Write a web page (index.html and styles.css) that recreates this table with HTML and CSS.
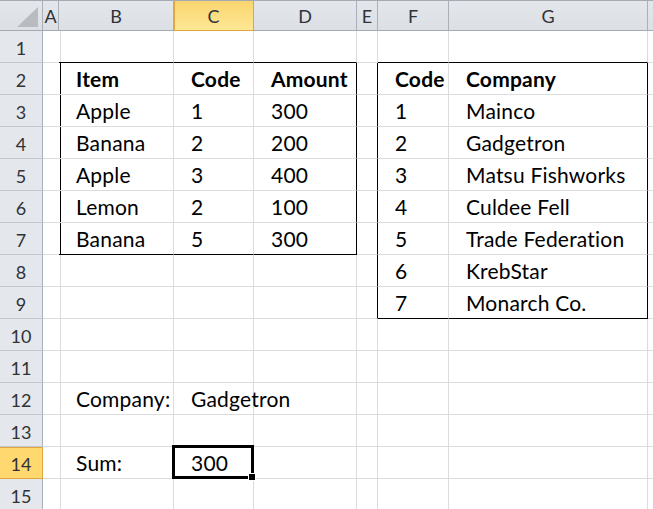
FILE: index.html
```html
<!DOCTYPE html>
<html>
<head>
<meta charset="utf-8">
<link rel="stylesheet" href="styles.css">
</head>
<body>
<div class="sheet">
  <div class="ch corner"><span class="tri"></span></div>
  <div class="ch">A</div><div class="ch">B</div><div class="ch sel">C</div><div class="ch">D</div><div class="ch">E</div><div class="ch">F</div><div class="ch">G</div><div class="ch"></div>

  <div class="rh">1</div>
  <div class="c"></div><div class="c kb"></div><div class="c kb"></div><div class="c kb"></div><div class="c"></div><div class="c kb"></div><div class="c kb"></div><div class="c"></div>

  <div class="rh">2</div>
  <div class="c kr"></div><div class="c b">Item</div><div class="c b">Code</div><div class="c b kr">Amount</div><div class="c kr"></div><div class="c b">Code</div><div class="c b kr">Company</div><div class="c"></div>

  <div class="rh">3</div>
  <div class="c kr"></div><div class="c">Apple</div><div class="c">1</div><div class="c kr">300</div><div class="c kr"></div><div class="c">1</div><div class="c kr">Mainco</div><div class="c"></div>

  <div class="rh">4</div>
  <div class="c kr"></div><div class="c">Banana</div><div class="c">2</div><div class="c kr">200</div><div class="c kr"></div><div class="c">2</div><div class="c kr">Gadgetron</div><div class="c"></div>

  <div class="rh">5</div>
  <div class="c kr"></div><div class="c">Apple</div><div class="c">3</div><div class="c kr">400</div><div class="c kr"></div><div class="c">3</div><div class="c kr">Matsu Fishworks</div><div class="c"></div>

  <div class="rh">6</div>
  <div class="c kr"></div><div class="c">Lemon</div><div class="c">2</div><div class="c kr">100</div><div class="c kr"></div><div class="c">4</div><div class="c kr">Culdee Fell</div><div class="c"></div>

  <div class="rh">7</div>
  <div class="c kr"></div><div class="c kb">Banana</div><div class="c kb">5</div><div class="c kr kb">300</div><div class="c kr"></div><div class="c">5</div><div class="c kr">Trade Federation</div><div class="c"></div>

  <div class="rh">8</div>
  <div class="c"></div><div class="c"></div><div class="c"></div><div class="c"></div><div class="c kr"></div><div class="c">6</div><div class="c kr">KrebStar</div><div class="c"></div>

  <div class="rh">9</div>
  <div class="c"></div><div class="c"></div><div class="c"></div><div class="c"></div><div class="c kr"></div><div class="c kb">7</div><div class="c kr kb">Monarch Co.</div><div class="c"></div>

  <div class="rh">10</div>
  <div class="c"></div><div class="c"></div><div class="c"></div><div class="c"></div><div class="c"></div><div class="c"></div><div class="c"></div><div class="c"></div>

  <div class="rh">11</div>
  <div class="c"></div><div class="c"></div><div class="c"></div><div class="c"></div><div class="c"></div><div class="c"></div><div class="c"></div><div class="c"></div>

  <div class="rh">12</div>
  <div class="c"></div><div class="c">Company:</div><div class="c">Gadgetron</div><div class="c"></div><div class="c"></div><div class="c"></div><div class="c"></div><div class="c"></div>

  <div class="rh">13</div>
  <div class="c"></div><div class="c"></div><div class="c"></div><div class="c"></div><div class="c"></div><div class="c"></div><div class="c"></div><div class="c"></div>

  <div class="rh sel">14</div>
  <div class="c"></div><div class="c">Sum:</div><div class="c">300</div><div class="c"></div><div class="c"></div><div class="c"></div><div class="c"></div><div class="c"></div>

  <div class="rh">15</div>
  <div class="c"></div><div class="c"></div><div class="c"></div><div class="c"></div><div class="c"></div><div class="c"></div><div class="c"></div><div class="c"></div>

  <div class="selection"><span class="handle"></span></div>
</div>
</body>
</html>
```

FILE: styles.css
```css
html, body {
  margin: 0;
  padding: 0;
  background: #ffffff;
  overflow: hidden;
}

.sheet {
  position: relative;
  display: grid;
  grid-template-columns: 43px 16px 115px 80px 103px 21px 71px 199px 1fr;
  grid-template-rows: 31px repeat(15, 32px);
  width: 653px;
  height: 509px;
  overflow: hidden;
  font-family: Lato, "Open Sans", sans-serif;
  font-size: 21px;
  color: #000000;
}

.sheet > div {
  box-sizing: border-box;
  min-width: 0;
}

.ch {
  background: linear-gradient(#e3e6ea, #dcdfe4);
  border-top: 1px solid #a5abb3;
  border-right: 1px solid #a9b0b9;
  border-bottom: 1px solid #a5abb3;
  display: flex;
  align-items: center;
  justify-content: center;
  font-size: 18px;
  color: #2f3338;
  padding-top: 1px;
}

.ch.sel {
  background: linear-gradient(#f9d56f, #ffe795);
  border-right-color: #e1a53d;
  border-bottom-color: #e1a53d;
  box-shadow: inset 1px 0 0 #e1a53d;
}

.corner {
  position: relative;
}

.tri {
  position: absolute;
  right: 4px;
  bottom: 3px;
  width: 0;
  height: 0;
  border-left: 21px solid transparent;
  border-bottom: 20px solid #b8bcc1;
}

.rh {
  background: #e4e7eb;
  border-right: 1px solid #a9b0b9;
  border-bottom: 1px solid #c3c8ce;
  display: flex;
  align-items: center;
  justify-content: center;
  font-size: 18px;
  color: #2f3338;
  padding-top: 3px;
}

.rh.sel {
  background: #ffd870;
  border-right-color: #e1a53d;
  border-bottom-color: #e1a53d;
  box-shadow: inset 0 1px 0 #e1a53d;
}

.c {
  border-right: 1px solid #dadcdd;
  border-bottom: 1px solid #dadcdd;
  display: flex;
  align-items: flex-end;
  padding: 0 0 3px 17px;
  white-space: nowrap;
  line-height: 24px;
  letter-spacing: 0.2px;
}

.c.b {
  font-weight: 700;
}

.c.kr {
  border-right-color: #000000;
}

.c.kb {
  border-bottom-color: #000000;
}

.selection {
  position: absolute;
  left: 172px;
  top: 445px;
  width: 82px;
  height: 34px;
  box-sizing: border-box;
  border: 3px solid #000000;
  pointer-events: none;
}

.handle {
  position: absolute;
  right: -5px;
  bottom: -5px;
  width: 6px;
  height: 6px;
  background: #000000;
  border: 1px solid #ffffff;
}
```
